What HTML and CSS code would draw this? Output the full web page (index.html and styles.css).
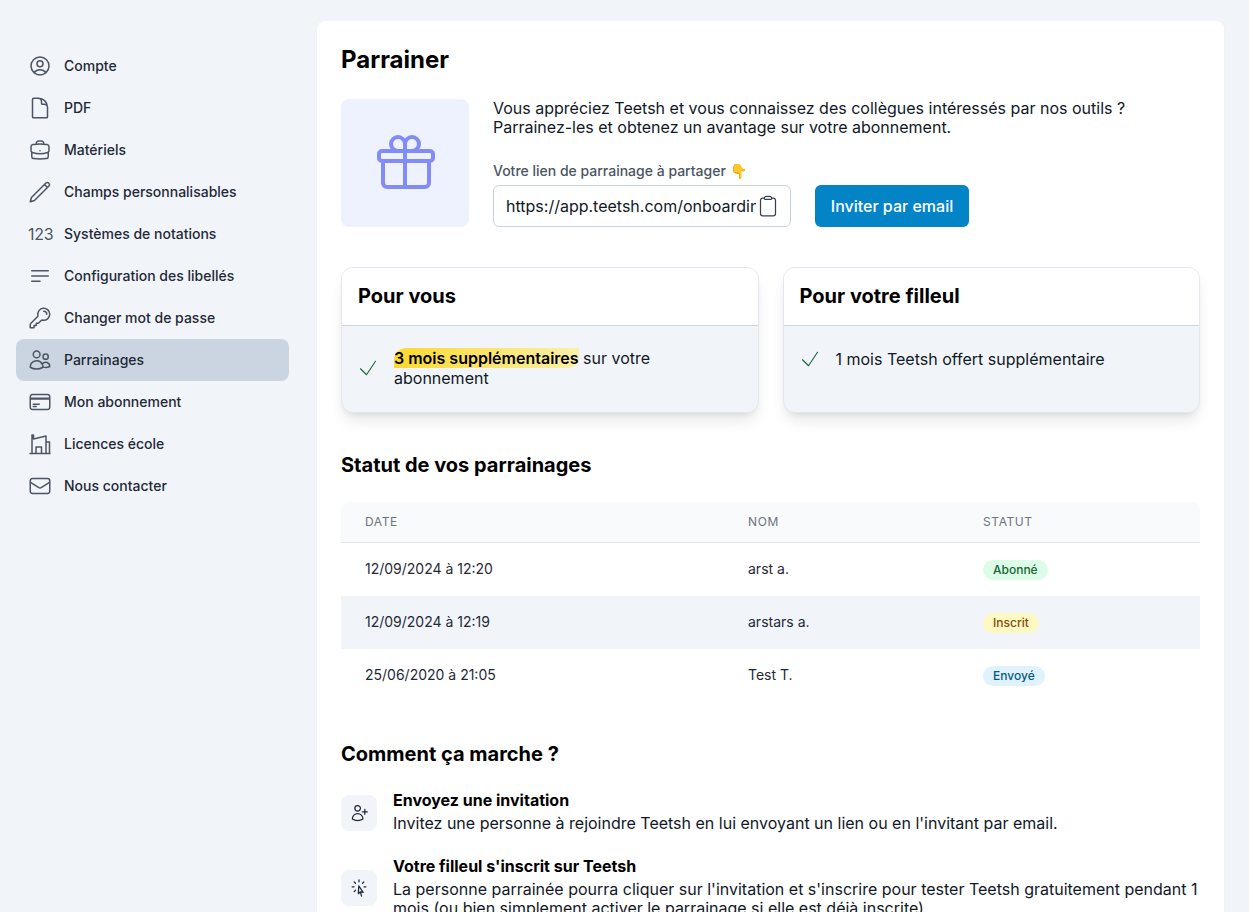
FILE: index.html
```html
<!DOCTYPE html>
<html lang="fr">
<head>
    <meta charset="UTF-8">
    <meta name="viewport" content="width=device-width, initial-scale=1.0">
    <title>Parrainer</title>
    <link rel="stylesheet" href="styles.css">
</head>
<body>
    <nav class="sidebar">
        <a class="nav-item"><svg class="nav-icon" viewBox="0 0 24 24"><path d="M17.982 18.725A7.488 7.488 0 0012 15.75a7.488 7.488 0 00-5.982 2.975m11.963 0a9 9 0 10-11.963 0m11.963 0A8.966 8.966 0 0112 21a8.966 8.966 0 01-5.982-2.275M15 9.75a3 3 0 11-6 0 3 3 0 016 0z"/></svg>Compte</a>
        <a class="nav-item"><svg class="nav-icon" viewBox="0 0 24 24"><path d="M19.5 14.25v-2.625a3.375 3.375 0 00-3.375-3.375h-1.5A1.125 1.125 0 0113.5 7.125v-1.5a3.375 3.375 0 00-3.375-3.375H8.25m2.25 0H5.625c-.621 0-1.125.504-1.125 1.125v17.25c0 .621.504 1.125 1.125 1.125h12.75c.621 0 1.125-.504 1.125-1.125V11.25a9 9 0 00-9-9z"/></svg>PDF</a>
        <a class="nav-item"><svg class="nav-icon" viewBox="0 0 24 24"><path d="M20.25 14.15v4.25c0 1.094-.787 2.036-1.872 2.18-2.087.277-4.216.42-6.378.42s-4.291-.143-6.378-.42c-1.085-.144-1.872-1.086-1.872-2.18v-4.25m16.5 0a2.18 2.18 0 00.75-1.661V8.706c0-1.081-.768-2.015-1.837-2.175a48.114 48.114 0 00-3.413-.387m4.5 8.006c-.194.165-.42.295-.673.38A23.978 23.978 0 0112 15.75c-2.648 0-5.195-.429-7.577-1.22a2.016 2.016 0 01-.673-.38m0 0A2.18 2.18 0 013 12.489V8.706c0-1.081.768-2.015 1.837-2.175a48.111 48.111 0 013.413-.387m7.5 0V5.25A2.25 2.25 0 0013.5 3h-3a2.25 2.25 0 00-2.25 2.25v.894m7.5 0a48.667 48.667 0 00-7.5 0M12 12.75h.008v.008H12v-.008z"/></svg>Matériels</a>
        <a class="nav-item"><svg class="nav-icon" viewBox="0 0 24 24"><path d="M2.25 21.75l1.2-4.2L18.2 2.8a2.2 2.2 0 013 3L6.45 20.55l-4.2 1.2zM16.5 4.5l3 3"/></svg>Champs personnalisables</a>
        <a class="nav-item"><span class="nav-digits">123</span>Systèmes de notations</a>
        <a class="nav-item"><svg class="nav-icon" viewBox="0 0 24 24"><path d="M3.75 6.75h16.5M3.75 12h16.5m-16.5 5.25H12"/></svg>Configuration des libellés</a>
        <a class="nav-item"><svg class="nav-icon" viewBox="0 0 24 24"><path d="M15.75 5.25a3 3 0 013 3m3 0a6 6 0 01-7.029 5.912c-.563-.097-1.159.026-1.563.43L10.5 17.25H8.25v2.25H6v2.25H2.25v-2.818c0-.597.237-1.17.659-1.591l6.499-6.499c.404-.404.527-1 .43-1.563A6 6 0 1121.75 8.25z"/></svg>Changer mot de passe</a>
        <a class="nav-item active"><svg class="nav-icon" viewBox="0 0 24 24"><path d="M15 19.128a9.38 9.38 0 002.625.372 9.337 9.337 0 004.121-.952 4.125 4.125 0 00-7.533-2.493M15 19.128v-.003c0-1.113-.285-2.16-.786-3.07M15 19.128v.106A12.318 12.318 0 018.624 21c-2.331 0-4.512-.645-6.374-1.766l-.001-.109a6.375 6.375 0 0111.964-3.07M12 6.375a3.375 3.375 0 11-6.75 0 3.375 3.375 0 016.75 0zm8.25 2.25a2.625 2.625 0 11-5.25 0 2.625 2.625 0 015.25 0z"/></svg>Parrainages</a>
        <a class="nav-item"><svg class="nav-icon" viewBox="0 0 24 24"><path d="M2.25 8.25h19.5M2.25 9h19.5m-16.5 5.25h6m-6 2.25h3m-3.75 3h15a2.25 2.25 0 002.25-2.25V6.75A2.25 2.25 0 0019.5 4.5h-15a2.25 2.25 0 00-2.25 2.25v10.5A2.25 2.25 0 004.5 19.5z"/></svg>Mon abonnement</a>
        <a class="nav-item"><svg class="nav-icon" viewBox="0 0 24 24"><path d="M2 21.5h20M4 21.5V3h1.5v4L18 4v17.5M18 10h3.5v11.5M8 21.5V15h5.5v6.5"/></svg>Licences école</a>
        <a class="nav-item"><svg class="nav-icon" viewBox="0 0 24 24"><path d="M21.75 6.75v10.5a2.25 2.25 0 01-2.25 2.25h-15a2.25 2.25 0 01-2.25-2.25V6.75m19.5 0A2.25 2.25 0 0019.5 4.5h-15a2.25 2.25 0 00-2.25 2.25m19.5 0v.243a2.25 2.25 0 01-1.07 1.916l-7.5 4.615a2.25 2.25 0 01-2.36 0L3.32 8.91a2.25 2.25 0 01-1.07-1.916V6.75"/></svg>Nous contacter</a>
    </nav>

    <main class="panel">
        <h1>Parrainer</h1>

        <section class="intro">
            <div class="gift-box">
                <svg class="gift-icon" viewBox="0 0 24 24"><path d="M21 11.25v8.25a1.5 1.5 0 01-1.5 1.5H5.25a1.5 1.5 0 01-1.5-1.5v-8.25M12 4.875A2.625 2.625 0 109.375 7.5H12m0-2.625V7.5m0-2.625A2.625 2.625 0 1114.625 7.5H12m0 0V21m-8.625-9.75h18c.621 0 1.125-.504 1.125-1.125v-1.5c0-.621-.504-1.125-1.125-1.125h-18c-.621 0-1.125.504-1.125 1.125v1.5c0 .621.504 1.125 1.125 1.125z"/></svg>
            </div>
            <div class="intro-text">
                <p>Vous appréciez Teetsh et vous connaissez des collègues intéressés par nos outils ?<br>Parrainez-les et obtenez un avantage sur votre abonnement.</p>
                <label class="link-label" for="lienParrainage">Votre lien de parrainage à partager 👇</label>
                <div class="link-row">
                    <div class="link-field">
                        <input class="link-value" id="lienParrainage" type="text" readonly value="https://app.teetsh.com/onboarding?parrain=arst">
                        <svg class="clip-icon" viewBox="0 0 24 24"><path d="M15.666 3.888A2.25 2.25 0 0013.5 2.25h-3c-1.03 0-1.9.693-2.166 1.638m7.332 0c.055.194.084.4.084.612v0a.75.75 0 01-.75.75H9a.75.75 0 01-.75-.75v0c0-.212.03-.418.084-.612m7.332 0c.646.049 1.288.11 1.927.184 1.1.128 1.907 1.077 1.907 2.185V19.5a2.25 2.25 0 01-2.25 2.25H6.75A2.25 2.25 0 014.5 19.5V6.257c0-1.108.806-2.057 1.907-2.185a48.208 48.208 0 011.927-.184"/></svg>
                    </div>
                    <button class="invite-btn">Inviter par email</button>
                </div>
            </div>
        </section>

        <section class="rewards">
            <div class="reward-card">
                <h3>Pour vous</h3>
                <div class="reward-body">
                    <svg class="check-icon" viewBox="0 0 24 24"><path d="M4.5 12.75l6 6 9-13.5"/></svg>
                    <p><strong class="marker">3 mois supplémentaires</strong> sur votre abonnement</p>
                </div>
            </div>
            <div class="reward-card">
                <h3>Pour votre filleul</h3>
                <div class="reward-body single">
                    <svg class="check-icon" viewBox="0 0 24 24"><path d="M4.5 12.75l6 6 9-13.5"/></svg>
                    <p>1 mois Teetsh offert supplémentaire</p>
                </div>
            </div>
        </section>

        <h2 class="status-title">Statut de vos parrainages</h2>
        <table class="status-table">
            <thead>
                <tr><th class="col-date">Date</th><th class="col-name">Nom</th><th>Statut</th></tr>
            </thead>
            <tbody>
                <tr><td>12/09/2024 à 12:20</td><td>arst a.</td><td><span class="badge badge-green">Abonné</span></td></tr>
                <tr class="striped"><td>12/09/2024 à 12:19</td><td>arstars a.</td><td><span class="badge badge-yellow">Inscrit</span></td></tr>
                <tr><td>25/06/2020 à 21:05</td><td>Test T.</td><td><span class="badge badge-blue">Envoyé</span></td></tr>
            </tbody>
        </table>

        <h2 class="how-title">Comment ça marche ?</h2>
        <div class="step">
            <div class="step-icon"><svg viewBox="0 0 24 24"><path d="M19 7.5v3m0 0v3m0-3h3m-3 0h-3m-2.25-4.125a3.375 3.375 0 11-6.75 0 3.375 3.375 0 016.75 0zM4 19.235v-.11a6.375 6.375 0 0112.75 0v.109A12.318 12.318 0 0110.374 21c-2.331 0-4.512-.645-6.374-1.766z"/></svg></div>
            <div>
                <h4>Envoyez une invitation</h4>
                <p>Invitez une personne à rejoindre Teetsh en lui envoyant un lien ou en l'invitant par email.</p>
            </div>
        </div>
        <div class="step">
            <div class="step-icon"><svg viewBox="0 0 24 24"><path d="M15.042 21.672L13.684 16.6m0 0l-2.51 2.225.569-9.47 5.227 7.917-3.286-.672zM12 2.25V4.5m5.834.166l-1.591 1.591M20.25 10.5H18M7.757 14.743l-1.59 1.59M6 10.5H3.75m4.007-4.243l-1.59-1.59"/></svg></div>
            <div>
                <h4>Votre filleul s'inscrit sur Teetsh</h4>
                <p>La personne parrainée pourra cliquer sur l'invitation et s'inscrire pour tester Teetsh gratuitement pendant 1 mois (ou bien simplement activer le parrainage si elle est déjà inscrite).</p>
            </div>
        </div>
    </main>
</body>
</html>
```

FILE: styles.css
```css
html, body {
    height: 100%;
}
body {
    font-family: Inter, "Liberation Sans", sans-serif;
    background-color: #f1f5f9;
    color: #111827;
    display: flex;
    align-items: flex-start;
    margin: 0;
    padding: 21px 25px 0 16px;
    box-sizing: border-box;
    overflow: hidden;
}
p, h1, h2, h3, h4 {
    margin: 0;
}

/* menu de gauche */
.sidebar {
    width: 273px;
    flex-shrink: 0;
    margin-right: 28px;
    padding-top: 24px;
}
.nav-item {
    display: flex;
    align-items: center;
    height: 42px;
    padding-left: 12px;
    border-radius: 8px;
    font-size: 14px;
    line-height: 20px;
    font-weight: 500;
    color: #1f2937;
}
.nav-item.active {
    background-color: #cbd5e1;
}
.nav-icon {
    width: 24px;
    height: 24px;
    margin-right: 12px;
    flex-shrink: 0;
    fill: none;
    stroke: #4b5563;
    stroke-width: 1.5;
    stroke-linecap: round;
    stroke-linejoin: round;
}
.nav-digits {
    width: 24px;
    margin-right: 12px;
    font-size: 16px;
    font-weight: 400;
    color: #4b5563;
    letter-spacing: -0.3px;
    white-space: nowrap;
}

/* panneau principal */
.panel {
    flex: 1;
    min-width: 0;
    background-color: #fff;
    border-radius: 8px 8px 0 0;
    box-shadow: 0 1px 2px rgba(0, 0, 0, 0.05);
    padding: 24px 24px 40px;
    min-height: 1000px;
    color: #000;
}
h1 {
    font-size: 24px;
    line-height: 30px;
    font-weight: 700;
}
.intro {
    display: flex;
    margin-top: 24px;
}
.gift-box {
    width: 128px;
    height: 128px;
    margin-right: 24px;
    flex-shrink: 0;
    background-color: #eef2ff;
    border-radius: 8px;
    display: flex;
    align-items: center;
    justify-content: center;
}
.gift-icon {
    width: 64px;
    height: 64px;
    fill: none;
    stroke: #818cf8;
    stroke-width: 1.5;
    stroke-linecap: round;
    stroke-linejoin: round;
}
.intro-text p {
    font-size: 16px;
    line-height: 19px;
    color: #111827;
}
.link-label {
    display: block;
    margin-top: 24px;
    font-size: 14px;
    line-height: 20px;
    font-weight: 500;
    color: #4b5563;
}
.link-row {
    display: flex;
    align-items: center;
    margin-top: 4px;
}
.link-field {
    width: 298px;
    height: 42px;
    box-sizing: border-box;
    display: flex;
    align-items: center;
    padding: 0 10px 0 12px;
    border: 1px solid #cbd5e1;
    border-radius: 6px;
    background-color: #fff;
}
.link-value {
    flex: 1;
    width: 0;
    min-width: 0;
    padding: 0;
    border: 0;
    outline: none;
    background: none;
    font-family: inherit;
    font-size: 16px;
    color: #111827;
}
.clip-icon {
    width: 24px;
    height: 24px;
    flex-shrink: 0;
    fill: none;
    stroke: #374151;
    stroke-width: 1.25;
    stroke-linecap: round;
    stroke-linejoin: round;
}
.invite-btn {
    width: 154px;
    height: 42px;
    margin-left: 24px;
    border: 0;
    border-radius: 6px;
    background-color: #0284c7;
    color: #fff;
    font-family: inherit;
    font-size: 16px;
    font-weight: 500;
}

/* cartes */
.rewards {
    display: grid;
    grid-template-columns: 1fr 1fr;
    gap: 24px;
    margin-top: 40px;
}
.reward-card {
    border: 1px solid #e2e8f0;
    border-radius: 12px;
    overflow: hidden;
    box-shadow: 0 10px 15px -3px rgba(0, 0, 0, 0.1), 0 4px 6px -4px rgba(0, 0, 0, 0.1);
    background-color: #f1f5f9;
    height: 146px;
    box-sizing: border-box;
}
.reward-card h3 {
    height: 58px;
    box-sizing: border-box;
    padding: 0 0 2px 16px;
    display: flex;
    align-items: center;
    background-color: #fff;
    border-bottom: 1px solid #cbd5e1;
    font-size: 20px;
    line-height: 28px;
    font-weight: 700;
}
.reward-body {
    display: flex;
    align-items: center;
    padding: 22px 16px 0;
    font-size: 16px;
    line-height: 20px;
    color: #111827;
}
.reward-body.single {
    padding-top: 23px;
}
.check-icon {
    width: 24px;
    height: 24px;
    margin: 0 14px 0 -2px;
    flex-shrink: 0;
    fill: none;
    stroke: #166534;
    stroke-width: 1.1;
    stroke-linecap: round;
    stroke-linejoin: round;
}
.reward-body.single .check-icon {
    margin-top: -2px;
    margin-bottom: -2px;
}
.marker {
    font-weight: 600;
    color: #000;
    background: linear-gradient(90deg, #fcd92f, #fbf0a8);
    border-radius: 12px 0 10px 0;
}

/* tableau */
.status-title {
    margin-top: 38px;
    font-size: 20px;
    line-height: 28px;
    font-weight: 700;
}
.status-table {
    width: 100%;
    margin-top: 23px;
    border-collapse: collapse;
    font-size: 14px;
    line-height: 20px;
    color: #1f2937;
}
.status-table th {
    height: 40px;
    padding: 0 24px;
    text-align: left;
    font-size: 12px;
    font-weight: 400;
    letter-spacing: 0.6px;
    text-transform: uppercase;
    color: #6b7280;
    background-color: #f9fafb;
    border-bottom: 1px solid #e5e7eb;
}
.status-table th:first-child {
    border-top-left-radius: 8px;
}
.status-table th:last-child {
    border-top-right-radius: 8px;
}
.col-date {
    width: 335px;
}
.col-name {
    width: 187px;
}
.status-table td {
    height: 51px;
    padding: 0 24px 2px;
}
.status-table td:last-child {
    height: 53px;
    padding-bottom: 0;
}
.striped td {
    background-color: #f1f5f9;
}
.badge {
    display: inline-block;
    padding: 0 10px;
    border-radius: 10px;
    font-size: 12px;
    line-height: 20px;
    font-weight: 500;
    vertical-align: middle;
}
.badge-green {
    background-color: #dcfce7;
    color: #166534;
}
.badge-yellow {
    background-color: #fef9c3;
    color: #854d0e;
}
.badge-blue {
    background-color: #e0f2fe;
    color: #075985;
}

/* étapes */
.how-title {
    margin-top: 38px;
    font-size: 20px;
    line-height: 28px;
    font-weight: 700;
}
.step {
    display: flex;
    align-items: center;
    margin-top: 21px;
}
.how-title + .step {
    margin-top: 20px;
}
.step-icon {
    width: 36px;
    height: 36px;
    margin: 4px 16px 0 0;
    flex-shrink: 0;
    border-radius: 8px;
    background-color: #f1f5f9;
    display: flex;
    align-items: center;
    justify-content: center;
}
.step-icon svg {
    width: 20px;
    height: 20px;
    fill: none;
    stroke: #1f2937;
    stroke-width: 1.5;
    stroke-linecap: round;
    stroke-linejoin: round;
}
.step h4 {
    font-size: 16px;
    line-height: 24px;
    font-weight: 700;
}
.step p {
    margin-top: 2px;
    font-size: 16px;
    line-height: 19px;
    color: #111827;
}
```
